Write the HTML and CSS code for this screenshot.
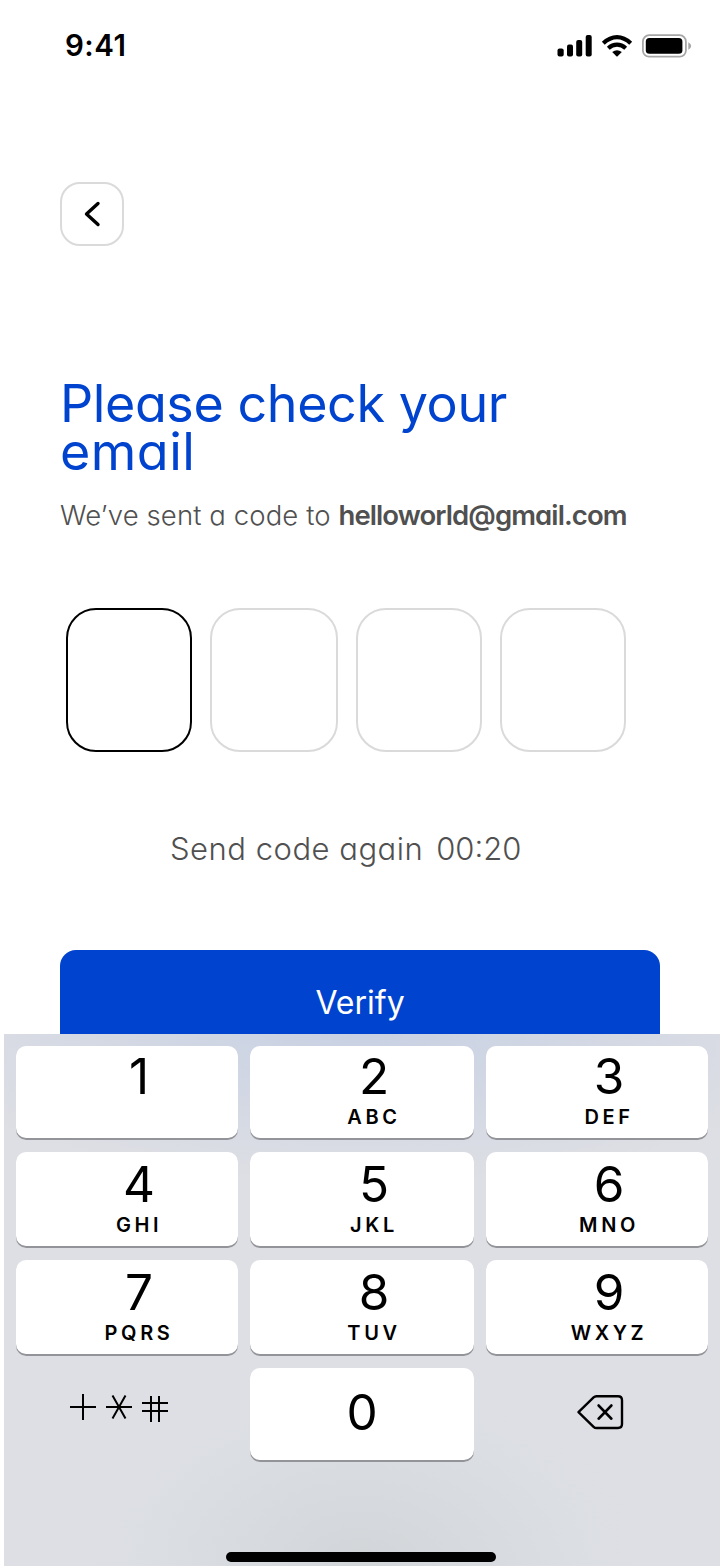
FILE: index.html
```html
<!DOCTYPE html>
<html lang="en">
<head>
<meta charset="utf-8">
<title>Verify email</title>
<link rel="stylesheet" href="styles.css">
</head>
<body>
<div class="screen">
  <header class="status">
    <span class="time">9:41</span>
    <svg class="status-icons" width="136" height="26" viewBox="0 0 136 26">
      <rect x="0.5" y="15.5" width="6.2" height="8" rx="2"/>
      <rect x="10" y="11.5" width="6" height="12" rx="2"/>
      <rect x="19.2" y="7" width="6" height="16.500" rx="2"/>
      <rect x="28.700" y="2" width="6" height="21.500" rx="2"/>
      <g fill="none" stroke="#000" stroke-width="4.200">
        <path d="M46.300 10.200Q52.800 4.100 60 4.100T73.700 10.200"/>
        <path d="M51.300 15.200Q55.200 11.700 60 11.700T68.700 15.200"/>
      </g>
      <path d="M55.200 19.100Q60 15.300 64.800 19.100L60.600 23.200Q60 23.700 59.400 23.200Z"/>
      <rect x="85.900" y="2.200" width="43" height="21.500" rx="6.200" fill="none" stroke="#a6a6a6" stroke-width="1.800"/>
      <rect x="88.800" y="5" width="36.600" height="15.800" rx="3.600"/>
      <path d="M131.300 9.300Q134.200 10.700 134.200 13T131.300 16.700Z" fill="#a6a6a6"/>
    </svg>
  </header>
  <main class="content">
    <button class="back" aria-label="Back">
      <svg width="20" height="28" viewBox="0 0 20 28"><path d="M16 3.500L4.500 14L16 24.500" fill="none" stroke="#000" stroke-width="3.400" stroke-linecap="round" stroke-linejoin="round"/></svg>
    </button>
    <h1 class="title"><span class="line-one">Please check your</span><br><span class="line-two">email</span></h1>
    <p class="note"><span class="lead">We’ve sent a code to</span> <b class="mail">helloworld@gmail.com</b></p>
    <div class="code">
      <div class="cell active"></div><div class="cell"></div><div class="cell"></div><div class="cell"></div>
    </div>
    <p class="again"><span class="resend">Send code again</span><span class="timer">00:20</span></p>
    <button class="verify">Verify</button>
  </main>
  <section class="keyboard">
    <div class="keys">
      <div class="key"><span class="digit">1</span></div>
      <div class="key"><span class="digit">2</span><span class="letters">ABC</span></div>
      <div class="key"><span class="digit">3</span><span class="letters">DEF</span></div>
      <div class="key"><span class="digit">4</span><span class="letters">GHI</span></div>
      <div class="key"><span class="digit">5</span><span class="letters">JKL</span></div>
      <div class="key"><span class="digit">6</span><span class="letters">MNO</span></div>
      <div class="key"><span class="digit">7</span><span class="letters">PQRS</span></div>
      <div class="key"><span class="digit">8</span><span class="letters">TUV</span></div>
      <div class="key"><span class="digit">9</span><span class="letters">WXYZ</span></div>
      <div class="plain symbols">
        <svg width="100" height="30" viewBox="0 0 100 30" fill="none" stroke="#000" stroke-width="2">
          <path d="M0 15H26M13 2V28M36 15H62M42.500 3.500L55.500 26.500M55.500 3.500L42.500 26.500M72 11H98M72 19H98M81 4V30M89 4V30"/>
        </svg>
      </div>
      <div class="key zero"><span class="digit">0</span></div>
      <div class="plain erase">
        <svg width="48" height="36" viewBox="0 0 48 36" fill="none" stroke="#000" stroke-width="2.400" stroke-linejoin="round" stroke-linecap="round">
          <path d="M19.500 2.200H41Q45 2.200 45 6.200V30Q45 34 41 34H19.500Q17.800 34 16.600 32.800L1.500 18.100L16.600 3.400Q17.800 2.200 19.500 2.200Z"/>
          <path d="M21.700 11.600L34.300 24.600M34.300 11.600L21.700 24.600" stroke-width="2.800"/>
        </svg>
      </div>
    </div>
    <div class="home"></div>
  </section>
</div>
</body>
</html>
```

FILE: styles.css
```css
* { box-sizing: border-box; }
body { margin: 0; background: #fff; font-family: Inter, "Liberation Sans", sans-serif; }
button { font: inherit; border: 0; padding: 0; }
.screen { width: 720px; height: 1566px; display: flex; flex-direction: column; overflow: hidden; }
.status { height: 182px; flex: none; display: flex; justify-content: space-between; align-items: flex-start; padding: 33px 27px 0 65px; }
.time { margin-top: -1px; font-size: 29.500px; line-height: 26px; font-weight: 600; letter-spacing: 0.5px; }
.status-icons { display: block; }
.content { height: 852px; flex: none; padding: 0 60px; display: flex; flex-direction: column; align-items: flex-start; overflow: hidden; font-feature-settings: "cv11"; color: #505050; }
.back { width: 64px; height: 64px; flex: none; border: 2px solid #dadada; border-radius: 20px; background: #fff; display: flex; align-items: center; justify-content: center; }
.title { margin: 134px 0 0; font-size: 52px; line-height: 48px; font-weight: 400; color: #0043ce; white-space: nowrap; }
.line-one { letter-spacing: -0.4px; }
.line-two { letter-spacing: 0.5px; }
.note { margin: 22px 0 0; font-size: 27.500px; line-height: 34px; font-weight: 300; white-space: nowrap; }
.lead { letter-spacing: 0.1px; }
.mail { font-weight: 600; letter-spacing: -0.9px; }
.code { margin: 76px 0 0 6px; display: grid; grid-template-columns: 126px 128px 126px 126px; gap: 18px; }
.cell { height: 144px; border: 2px solid #dadada; border-radius: 30px; }
.active { border-color: #000; }
.again { margin: 77px 0 0 110px; display: flex; gap: 13px; font-size: 31px; line-height: 40px; font-weight: 300; white-space: nowrap; }
.resend { letter-spacing: 0.5px; }
.verify { margin-top: 81px; width: 600px; height: 106px; flex: none; border-radius: 16px; background: #0043ce; color: #fff; font-size: 32px; line-height: 106px; font-feature-settings: normal; }
.keyboard { margin-left: 4px; height: 532px; flex: none; padding: 12px 12px 0; display: flex; flex-direction: column; align-items: center;
  background: radial-gradient(ellipse 290px 190px at 50% 100%, #d2d5d8, #dadee3 65%, rgba(222,223,228,0)), radial-gradient(ellipse 480px 150px at 50% 0, #c8d1e3, #dedfe4); }
.keys { display: grid; width: 692px; grid-template-columns: 222px 224px 222px; column-gap: 12px; grid-template-rows: 106px 108px 108px 94px; }
.key { height: 94px; border-radius: 10px; background: #fff; box-shadow: inset 0 -2px 0 #929499; padding: 0 0 0 24px; display: flex; flex-direction: column; align-items: center; color: #000; }
.key:nth-child(n+4):nth-child(-n+9) { height: 96px; padding-top: 2px; }
.digit { margin-top: -1px; font-size: 49.500px; line-height: 62px; font-weight: 400; }
.letters { font-size: 20px; line-height: 20px; font-weight: 600; letter-spacing: 3.600px; }
.zero { padding: 14px 0 0; }
.symbols { padding: 24px 0 0 54px; }
.erase { padding: 26px 0 0 91px; }
.plain svg { display: block; }
.home { margin-top: 90px; width: 270px; height: 10px; border-radius: 5px; background: #000; margin-right: 2px; }
```
